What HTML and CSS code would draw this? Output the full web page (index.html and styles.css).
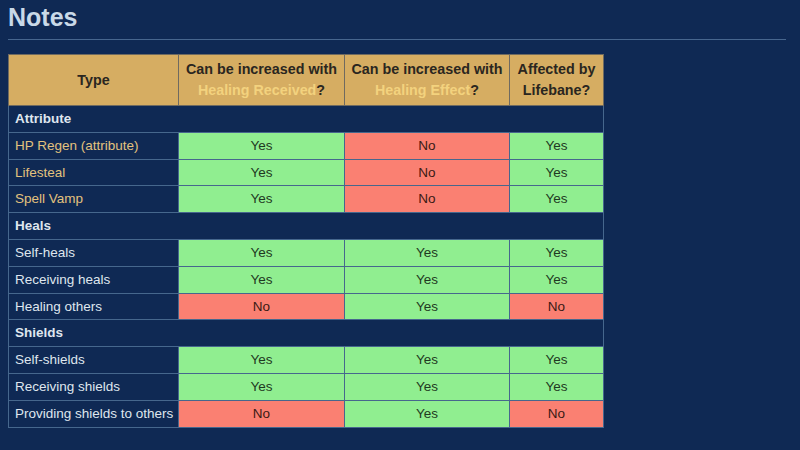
FILE: index.html
```html
<!DOCTYPE html>
<html>
<head>
<meta charset="utf-8">
<link rel="stylesheet" href="styles.css">
</head>
<body>
<h2 class="title">Notes</h2>
<table class="notes">
  <colgroup>
    <col class="c1"><col class="c2"><col class="c3"><col class="c4">
  </colgroup>
  <thead>
    <tr>
      <th>Type</th>
      <th>Can be increased with <span class="hl">Healing Received</span>?</th>
      <th>Can be increased with <span class="hl">Healing Effect</span>?</th>
      <th>Affected by Lifebane?</th>
    </tr>
  </thead>
  <tbody>
    <tr class="sec"><td colspan="4">Attribute</td></tr>
    <tr><td class="name gold">HP Regen (attribute)</td><td class="yes">Yes</td><td class="no">No</td><td class="yes">Yes</td></tr>
    <tr><td class="name gold">Lifesteal</td><td class="yes">Yes</td><td class="no">No</td><td class="yes">Yes</td></tr>
    <tr><td class="name gold">Spell Vamp</td><td class="yes">Yes</td><td class="no">No</td><td class="yes">Yes</td></tr>
    <tr class="sec"><td colspan="4">Heals</td></tr>
    <tr><td class="name">Self-heals</td><td class="yes">Yes</td><td class="yes">Yes</td><td class="yes">Yes</td></tr>
    <tr><td class="name">Receiving heals</td><td class="yes">Yes</td><td class="yes">Yes</td><td class="yes">Yes</td></tr>
    <tr><td class="name">Healing others</td><td class="no">No</td><td class="yes">Yes</td><td class="no">No</td></tr>
    <tr class="sec"><td colspan="4">Shields</td></tr>
    <tr><td class="name">Self-shields</td><td class="yes">Yes</td><td class="yes">Yes</td><td class="yes">Yes</td></tr>
    <tr><td class="name">Receiving shields</td><td class="yes">Yes</td><td class="yes">Yes</td><td class="yes">Yes</td></tr>
    <tr><td class="name">Providing shields to others</td><td class="no">No</td><td class="yes">Yes</td><td class="no">No</td></tr>
  </tbody>
</table>
</body>
</html>
```
FILE: styles.css
```css
html, body {
  margin: 0;
  background: #0f2954;
}
body {
  padding: 0 14px 0 8px;
  font-family: "Liberation Sans", Arial, sans-serif;
  color: #dfe6ee;
}
.title {
  margin: 0;
  padding-top: 3px;
  height: 36px;
  font-size: 25px;
  line-height: 28px;
  font-weight: bold;
  color: #c9d9e8;
  border-bottom: 1px solid #47668e;
}
.notes {
  margin-top: 14px;
  border-collapse: collapse;
  table-layout: fixed;
  width: 595px;
  font-size: 13.5px;
}
.c1 { width: 170px; }
.c2 { width: 166px; }
.c3 { width: 165px; }
.c4 { width: 94px; }
.notes th {
  background: #d6ad62;
  color: #2a2620;
  font-weight: bold;
  font-size: 14.3px;
  line-height: 21px;
  padding: 4px 2px;
  height: 42px;
  border: 1px solid #6f6a60;
  text-align: center;
}
.hl { color: #f3d27e; }
.notes td {
  border: 1px solid #46678d;
  padding: 4px 6px;
  line-height: 17.8px;
  height: 17.8px;
  white-space: nowrap;
}
.notes td.name {
  padding-right: 2px;
}
.sec td {
  font-weight: bold;
  color: #dfe6ee;
  background: #0f2954;
}
.name { color: #dfe6ee; }
.gold { color: #e3c27e; }
.yes {
  background: #90ee90;
  color: #1f3a22;
  text-align: center;
}
.no {
  background: #fa8072;
  color: #3a1a14;
  text-align: center;
}
```
